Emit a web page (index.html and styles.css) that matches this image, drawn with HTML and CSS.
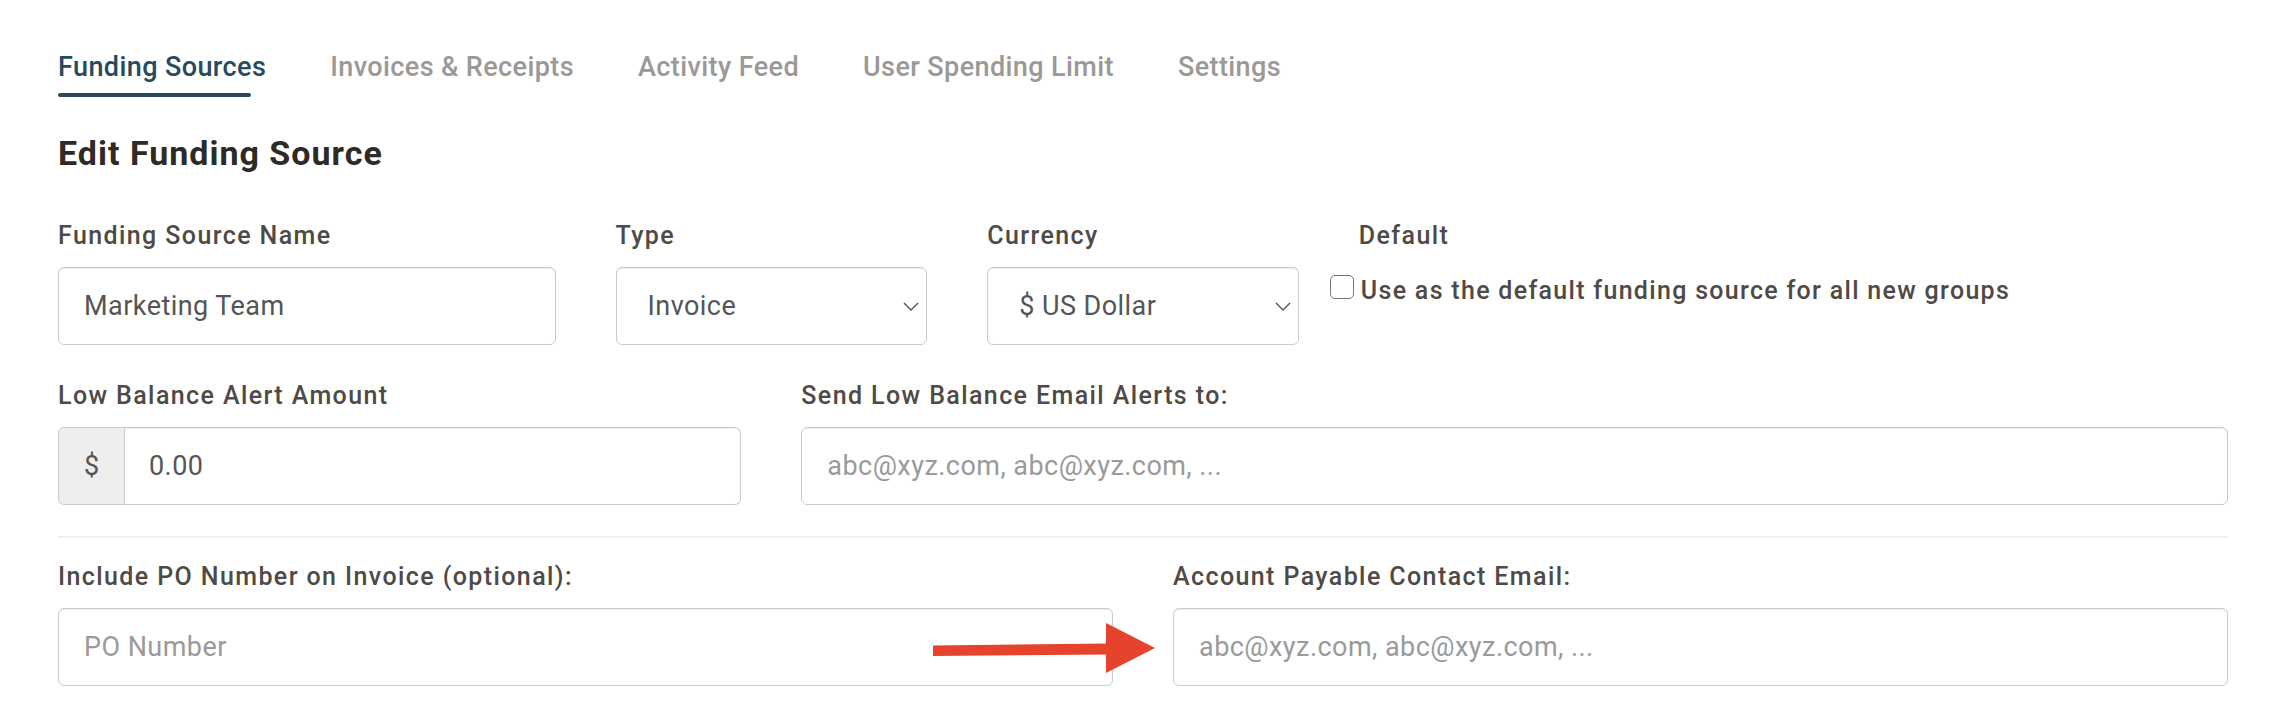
FILE: index.html
```html
<!DOCTYPE html>
<html>
	<head>
		<meta charset="utf-8">
		<title>Edit Funding Source</title>
		<link rel="stylesheet" href="styles.css">
	</head>
	<body>
		<div class="page">
			<ul class="tabs">
				<li class="tab active">Funding Sources</li>
				<li class="tab">Invoices &amp; Receipts</li>
				<li class="tab">Activity Feed</li>
				<li class="tab">User Spending Limit</li>
				<li class="tab">Settings</li>
			</ul>

			<h1 class="title">Edit Funding Source</h1>

			<form class="form">
				<div class="row row-first">
					<div class="field span-3">
						<label class="label">Funding Source Name</label>
						<input class="control" type="text" value="Marketing Team">
					</div>
					<div class="field span-2">
						<label class="label">Type</label>
						<div class="select-wrap">
							<select class="control select"><option>Invoice</option></select>
							<svg class="chevron" width="16" height="9" viewBox="0 0 16 9"><polyline points="1,1 8,8 15,1" fill="none" stroke="#555" stroke-width="1.4"/></svg>
						</div>
					</div>
					<div class="field span-2">
						<label class="label">Currency</label>
						<div class="select-wrap">
							<select class="control select"><option>$ US Dollar</option></select>
							<svg class="chevron" width="16" height="9" viewBox="0 0 16 9"><polyline points="1,1 8,8 15,1" fill="none" stroke="#555" stroke-width="1.4"/></svg>
						</div>
					</div>
					<div class="field span-5">
						<label class="label">Default</label>
						<label class="check">
							<input class="check-box" type="checkbox">
							<span class="check-text">Use as the default funding source for all new groups</span>
						</label>
					</div>
				</div>

				<div class="row">
					<div class="field span-4">
						<label class="label">Low Balance Alert Amount</label>
						<div class="input-group">
							<span class="addon">$</span>
							<input class="control" type="text" value="0.00">
						</div>
					</div>
					<div class="field span-8">
						<label class="label">Send Low Balance Email Alerts to:</label>
						<input class="control" type="text" placeholder="abc@xyz.com, abc@xyz.com, ...">
					</div>
				</div>

				<hr class="divider">

				<div class="row row-last">
					<div class="field span-6">
						<label class="label">Include PO Number on Invoice (optional):</label>
						<input class="control" type="text" placeholder="PO Number">
					</div>
					<div class="field span-6">
						<label class="label">Account Payable Contact Email:</label>
						<input class="control" type="text" placeholder="abc@xyz.com, abc@xyz.com, ...">
					</div>
				</div>
			</form>

			<!-- annotation arrow drawn over the form -->
			<svg class="arrow" width="230" height="56" viewBox="0 0 230 56">
				<polygon points="3,25.5 178,23.5 178,34.5 3,36" fill="#e5432b"/>
				<polygon points="176,3 225,28 176,53" fill="#e5432b"/>
			</svg>
		</div>
	</body>
</html>
```

FILE: styles.css
```css
*{margin: 0;padding: 0;box-sizing: border-box;}
ul,li{list-style: none;}
body{background: #fff;font-family: Roboto, "Liberation Sans", Arial, sans-serif;color: #4f4a45;}

.page{position: relative;padding: 52px 60px 0 58px;}

/* tabs */
.tabs{display: flex;gap: 64px;}
.tab{font-size: 27px;line-height: 30px;font-weight: 500;letter-spacing: 0.4px;color: #9b9896;}
.tab.active{color: #274b5c;}
.tab.active::after{content: "";display: block;margin-top: 11px;height: 4px;width: calc(100% - 15px);
	background: #274b5c;border-radius: 2px;}

.title{margin-top: 36px;font-size: 34px;line-height: 40px;font-weight: 700;letter-spacing: 1px;color: #2e2a26;}

/* form grid */
.row{display: grid;grid-template-columns: repeat(12, 1fr);column-gap: 60px;margin-top: 37px;}
.row-first{margin-top: 49px;}
.row-last{margin-top: 25px;}
.span-2{grid-column: span 2;}
.span-3{grid-column: span 3;}
.span-4{grid-column: span 4;}
.span-5{grid-column: span 5;}
.span-6{grid-column: span 6;}
.span-8{grid-column: span 8;}

.field{display: flex;flex-direction: column;min-width: 0;}
.label{display: block;font-size: 25px;line-height: 28px;font-weight: 500;letter-spacing: 1.4px;color: #4f4a45;margin-bottom: 17px;}

.control{display: block;width: 100%;height: 78px;padding: 0 25px;
	font-family: Roboto, "Liberation Sans", Arial, sans-serif;font-size: 27px;letter-spacing: 0.45px;color: #555;
	background: #fff;border: 1px solid #ccc;border-radius: 6px;
	box-shadow: inset 0 1px 1px rgba(0,0,0,.08);outline: none;}
.control::placeholder{color: #9a9a9a;}

.select-wrap{position: relative;}
.select{appearance: none;-webkit-appearance: none;padding-left: 31px;padding-right: 40px;}
.chevron{position: absolute;right: 8px;top: 35px;pointer-events: none;}

.check{display: flex;align-items: flex-start;margin-top: 8px;margin-left: -29px;}
.check-box{appearance: none;-webkit-appearance: none;flex: none;width: 24px;height: 24px;
	border: 1.5px solid #777;border-radius: 5px;background: #fff;}
.check-text{margin-left: 7px;margin-top: 2px;font-size: 25px;line-height: 28px;font-weight: 500;letter-spacing: 1.3px;color: #4f4a45;}

.input-group{display: flex;}
.addon{flex: none;width: 67px;height: 78px;display: flex;align-items: center;justify-content: center;
	font-size: 27px;color: #555;background: #eee;border: 1px solid #ccc;border-radius: 6px 0 0 6px;}
.input-group .control{border-left: none;border-radius: 0 6px 6px 0;padding-left: 24px;}

.divider{border: none;border-top: 2px solid #efefef;margin-top: 31px;}

.arrow{position: absolute;left: 930px;top: 620px;}
```
